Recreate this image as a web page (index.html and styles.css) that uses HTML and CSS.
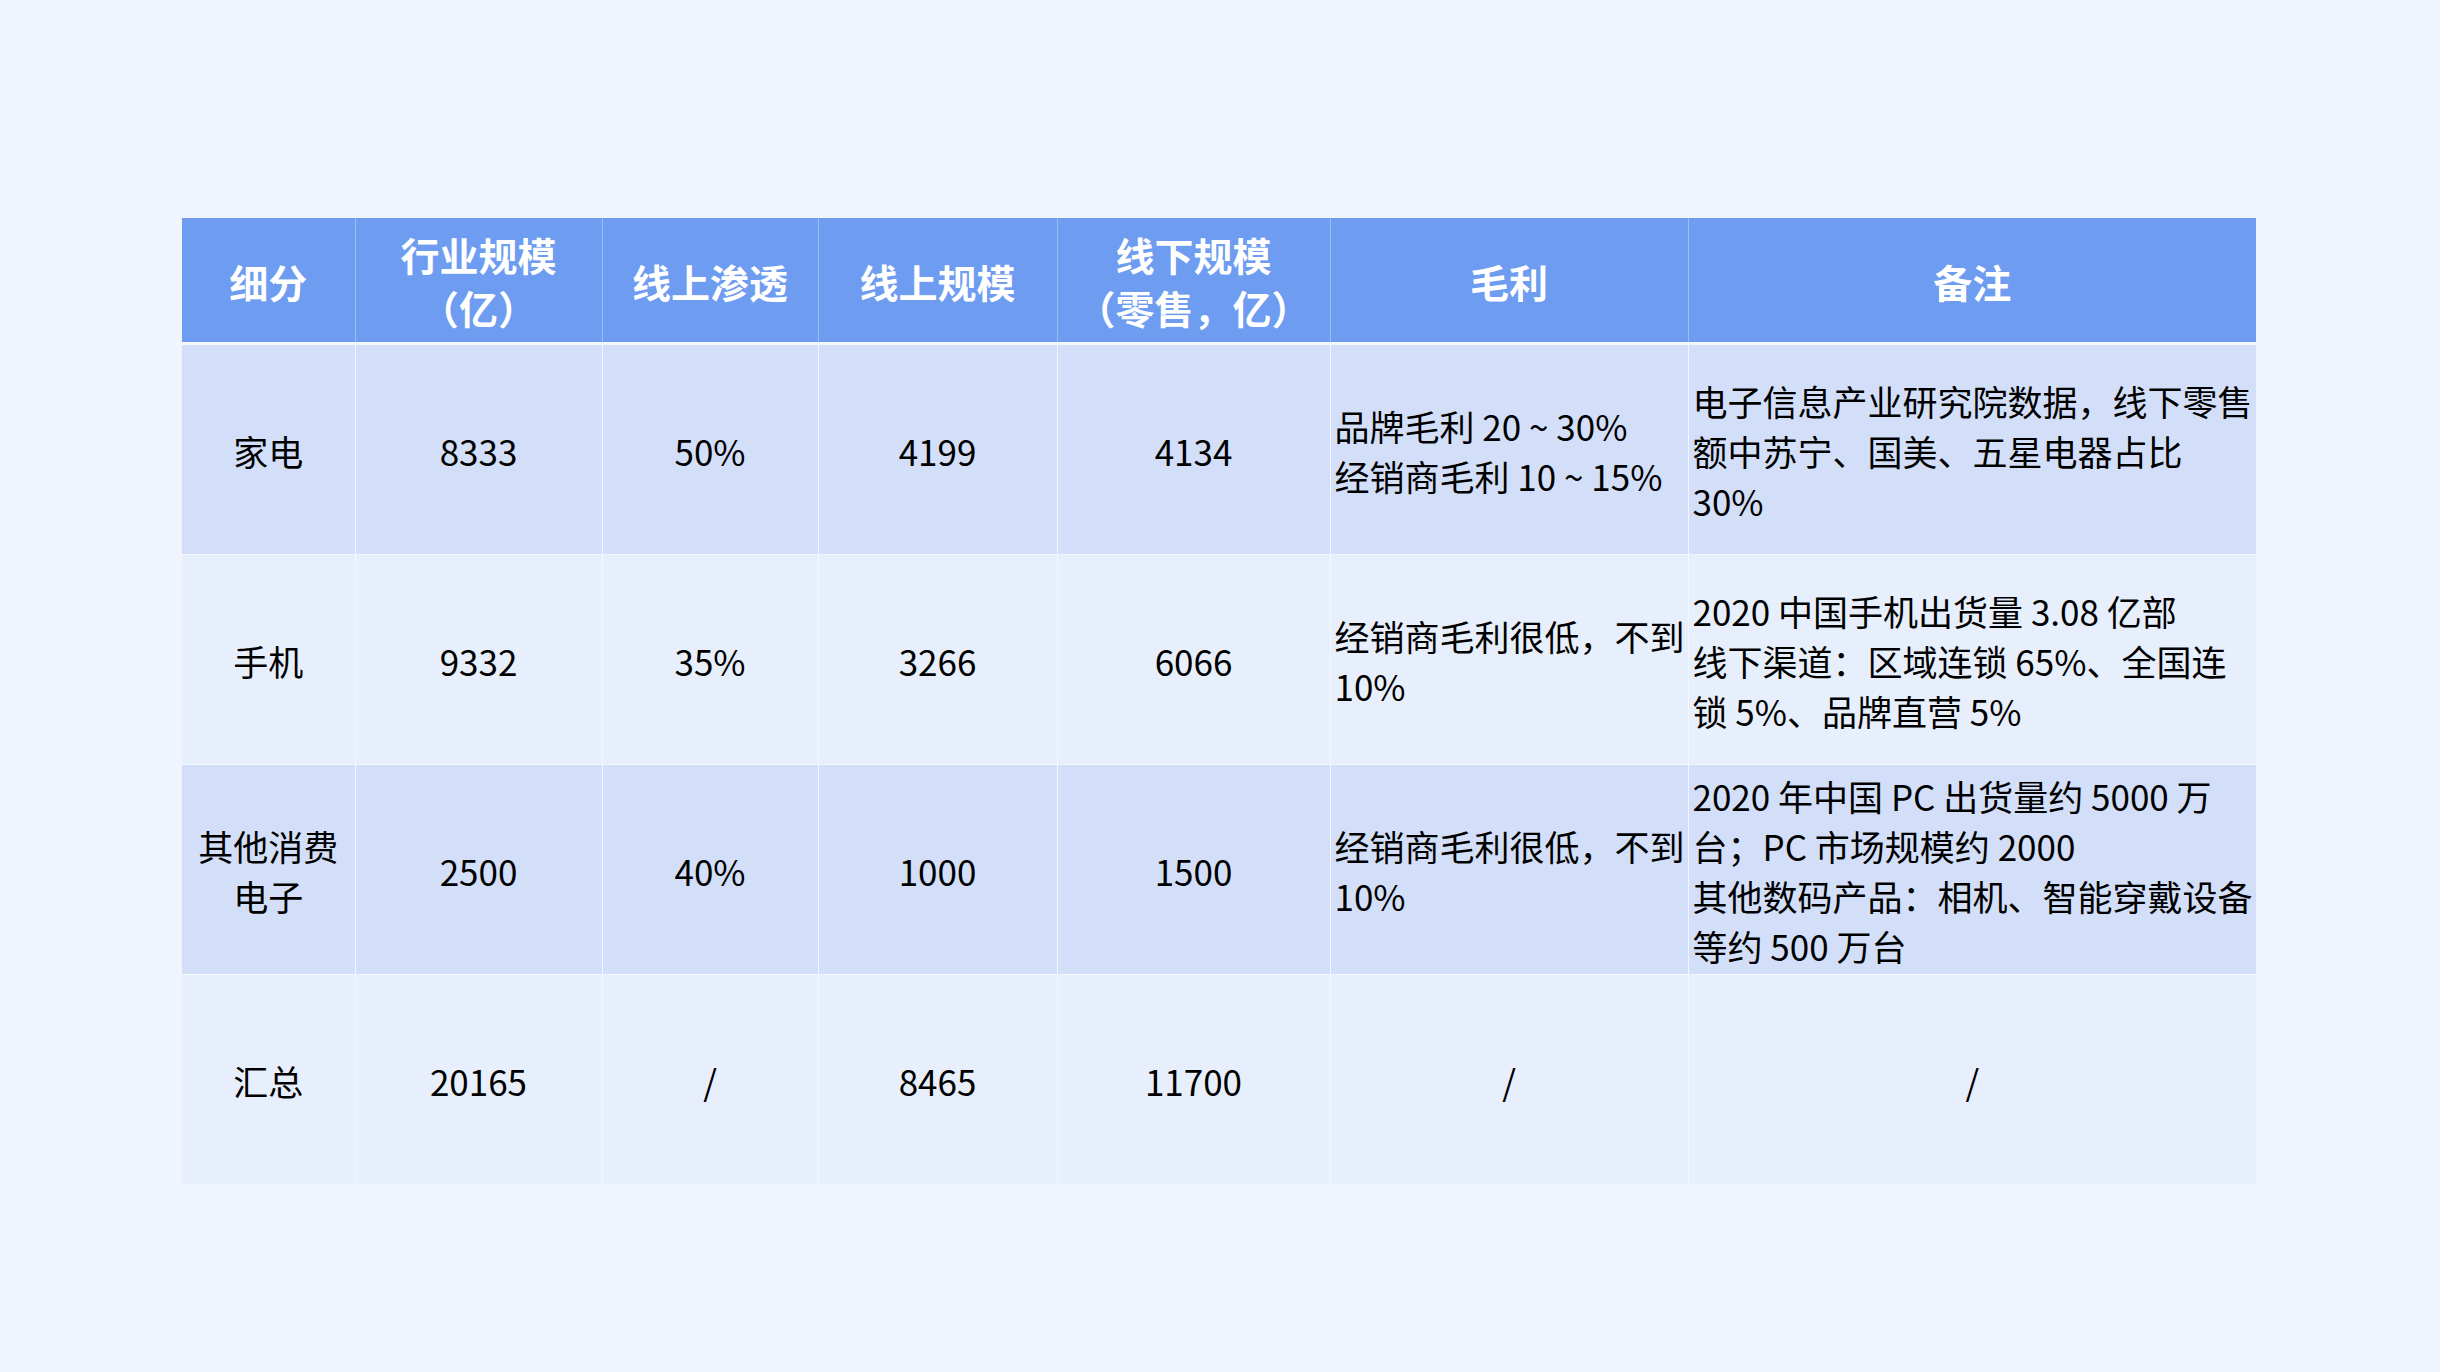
FILE: index.html
```html
<!DOCTYPE html>
<html lang="zh-CN">
<head>
<meta charset="utf-8">
<title>消费电子渠道规模</title>
<link rel="stylesheet" href="styles.css">
</head>
<body>
<main class="page">
  <table class="data">
    <colgroup>
      <col class="c1"><col class="c2"><col class="c3"><col class="c4"><col class="c5"><col class="c6"><col class="c7">
    </colgroup>
    <thead>
      <tr>
        <th>细分</th>
        <th>行业规模<br>（亿）</th>
        <th>线上渗透</th>
        <th>线上规模</th>
        <th>线下规模<br>（零售，亿）</th>
        <th>毛利</th>
        <th>备注</th>
      </tr>
    </thead>
    <tbody>
      <tr class="odd">
        <td>家电</td>
        <td>8333</td>
        <td>50%</td>
        <td>4199</td>
        <td>4134</td>
        <td class="left">品牌毛利 20 ~ 30%<br>经销商毛利 10 ~ 15%</td>
        <td class="left">电子信息产业研究院数据，线下零售<br>额中苏宁、国美、五星电器占比<br>30%</td>
      </tr>
      <tr class="even">
        <td>手机</td>
        <td>9332</td>
        <td>35%</td>
        <td>3266</td>
        <td>6066</td>
        <td class="left">经销商毛利很低，不到<br>10%</td>
        <td class="left">2020 中国手机出货量 3.08 亿部<br>线下渠道：区域连锁 65%、全国连<br>锁 5%、品牌直营 5%</td>
      </tr>
      <tr class="odd">
        <td>其他消费<br>电子</td>
        <td>2500</td>
        <td>40%</td>
        <td>1000</td>
        <td>1500</td>
        <td class="left">经销商毛利很低，不到<br>10%</td>
        <td class="left">2020 年中国 PC 出货量约 5000 万<br>台；PC 市场规模约 2000<br>其他数码产品：相机、智能穿戴设备<br>等约 500 万台</td>
      </tr>
      <tr class="even">
        <td>汇总</td>
        <td>20165</td>
        <td>/</td>
        <td>8465</td>
        <td>11700</td>
        <td>/</td>
        <td>/</td>
      </tr>
    </tbody>
  </table>
</main>
</body>
</html>
```

FILE: styles.css
```css
html, body {
  margin: 0;
  padding: 0;
  background: #eff4fe;
}
body {
  width: 2440px;
  height: 1372px;
  overflow: hidden;
  font-family: "Noto Sans CJK SC", "Noto Sans", sans-serif;
  color: #000;
}
.page {
  padding: 218px 0 0 182px;
}
.data {
  width: 2074px;
  table-layout: fixed;
  border-collapse: collapse;
}
.c1 { width: 173px; }
.c2 { width: 247px; }
.c3 { width: 216px; }
.c4 { width: 239px; }
.c5 { width: 273px; }
.c6 { width: 358px; }
.c7 { width: 568px; }

.data th {
  height: 122px;
  background: #6d9cf0;
  color: #fff;
  font-weight: 700;
  font-size: 39px;
  line-height: 53px;
  text-align: center;
  vertical-align: middle;
  padding: 2px 0 0;
  border-left: 1px solid #9bbcf6;
  border-right: 1px solid #9bbcf6;
  border-bottom: 3px solid #f4f7fe;
}
.data th:first-child { border-left: none; }
.data th:last-child { border-right: none; }

.data td {
  height: 206px;
  font-size: 35px;
  line-height: 50px;
  text-align: center;
  vertical-align: middle;
  padding: 3px 4px 0;
  white-space: nowrap;
  border: 1px solid #f3f6fd;
}
.data td:first-child { border-left: none; }
.data td:last-child { border-right: none; }
.data tr:last-child td { border-bottom: none; }

.data td.left {
  text-align: left;
  padding-left: 4px;
  padding-right: 0;
}
.odd td { background: #d3dff8; }
.even td { background: #e8effc; }
```
